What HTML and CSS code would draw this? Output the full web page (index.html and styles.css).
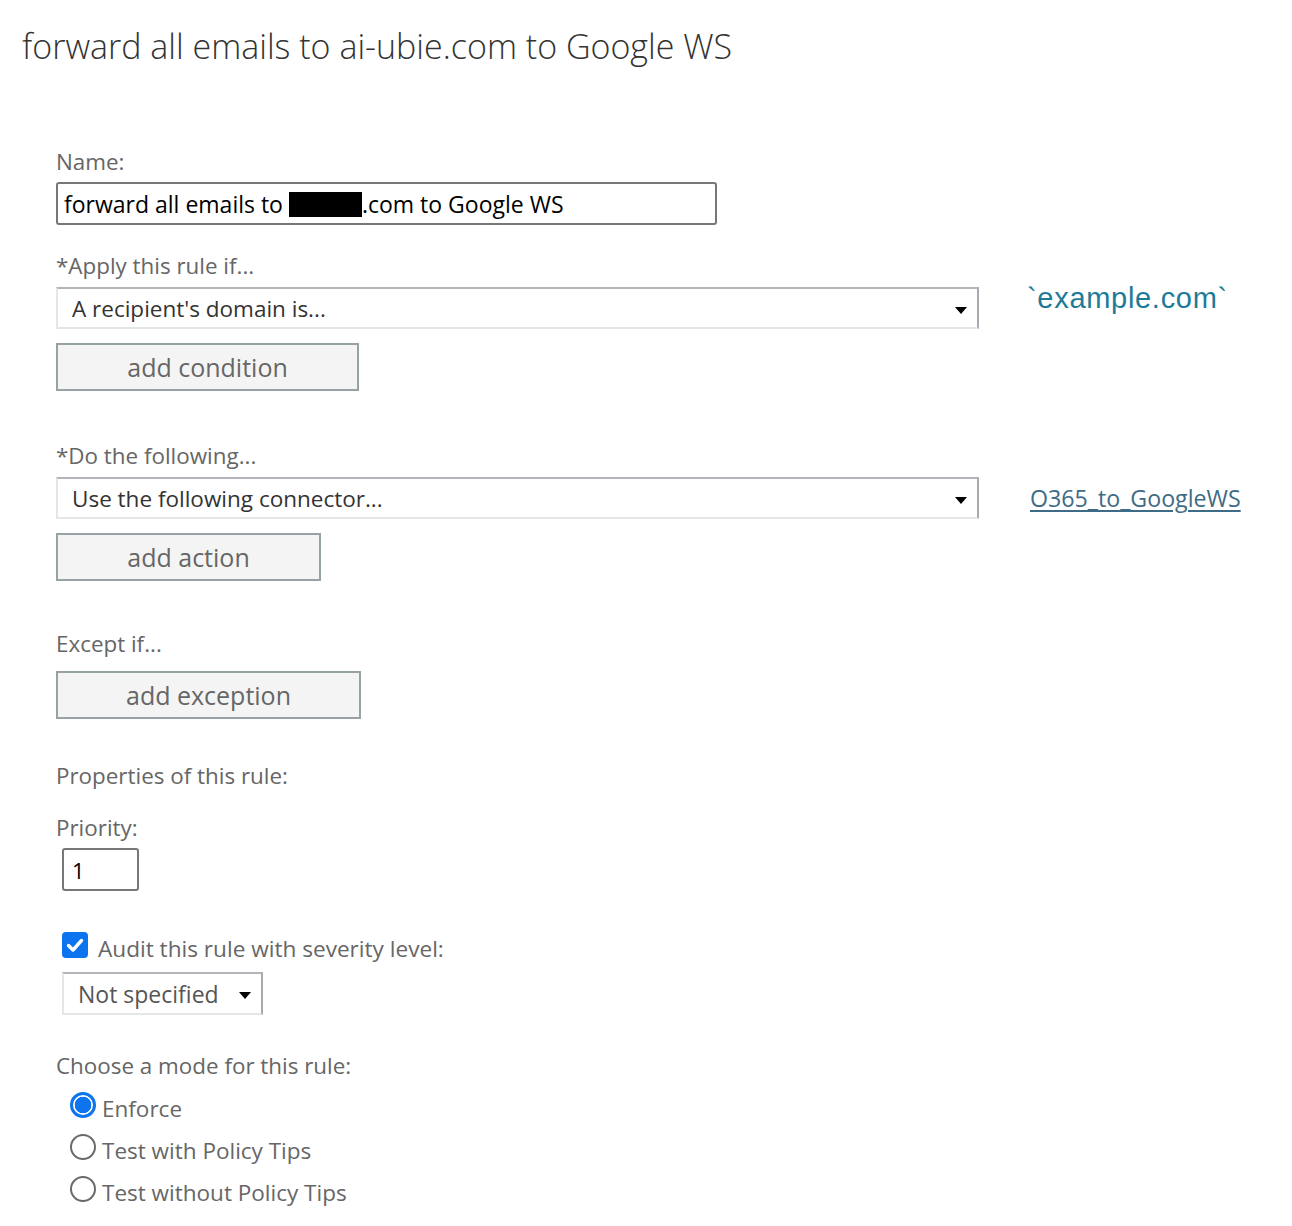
FILE: index.html
```html
<!DOCTYPE html>
<html lang="en">
<head>
<meta charset="utf-8">
<title>Rule</title>
<link rel="stylesheet" href="styles.css">
</head>
<body>
<h1 class="title">forward all emails to ai-ubie.com to Google WS</h1>
<div class="form">
  <div class="label">Name:</div>
  <div class="name-input"><span>forward all emails to </span><span class="redact"></span><span>.com to Google WS</span></div>

  <div class="label gap-l">*Apply this rule if...</div>
  <div class="row">
    <div class="select wide"><span>A recipient's domain is...</span><span class="arrow"></span></div>
    <div class="side-code">`example.com`</div>
  </div>
  <div class="btn btn-cond">add condition</div>

  <div class="label gap-xl">*Do the following...</div>
  <div class="row">
    <div class="select wide"><span>Use the following connector...</span><span class="arrow"></span></div>
    <a class="side-link" href="#">O365_to_GoogleWS</a>
  </div>
  <div class="btn btn-action">add action</div>

  <div class="label gap-xl2">Except if...</div>
  <div class="btn btn-exc">add exception</div>

  <div class="label gap-p">Properties of this rule:</div>
  <div class="label gap-pr">Priority:</div>
  <div class="priority">1</div>

  <div class="check-row">
    <span class="checkbox"><svg width="26" height="26" viewBox="0 0 26 26"><path d="M6.5 13.5l4.5 4.5 8.5-9.5" fill="none" stroke="#fff" stroke-width="3.4" stroke-linecap="round" stroke-linejoin="round"/></svg></span>
    <span class="check-label">Audit this rule with severity level:</span>
  </div>
  <div class="select small"><span>Not specified</span><span class="arrow"></span></div>

  <div class="label gap-mode">Choose a mode for this rule:</div>
  <div class="radios">
    <div class="radio-row"><span class="radio on"></span><span>Enforce</span></div>
    <div class="radio-row"><span class="radio"></span><span>Test with Policy Tips</span></div>
    <div class="radio-row"><span class="radio"></span><span>Test without Policy Tips</span></div>
  </div>
</div>
</body>
</html>
```
FILE: styles.css
```css
body {
  margin: 0;
  background: #fff;
  font-family: "Open Sans", "Noto Sans", sans-serif;
  color: #666;
}
.title {
  margin: 0;
  padding: 22px 0 0 22px;
  font-size: 34px;
  line-height: 48px;
  font-weight: 300;
  color: #333;
}
.form {
  padding-left: 56px;
  margin-top: 77px;
  display: flex;
  flex-direction: column;
  align-items: flex-start;
}
.label {
  font-size: 22.4px;
  line-height: 30px;
  color: #666;
}
.gap-l { margin-top: 26px; }
.gap-xl { margin-top: 50px; }
.gap-xl2 { margin-top: 48px; }
.gap-p { margin-top: 42px; }
.gap-pr { margin-top: 22px; }
.gap-mode { margin-top: 36px; }

.name-input {
  margin-top: 5px;
  box-sizing: border-box;
  width: 661px;
  height: 43px;
  border: 2px solid #777;
  border-radius: 3px;
  display: flex;
  align-items: center;
  padding-left: 6px;
  font-size: 23px;
  color: #000;
  white-space: pre;
}
.redact {
  display: inline-block;
  width: 73px;
  height: 25px;
  background: #000;
  margin-top: 2px;
}
.row {
  margin-top: 6px;
  display: flex;
  align-items: center;
}
.select {
  box-sizing: border-box;
  height: 42px;
  border-top: 2px solid #b4b4ba;
  border-right: 2px solid #a8a8b0;
  border-left: 2px solid #e3e7ea;
  border-bottom: 2px solid #e3e7ea;
  display: flex;
  align-items: center;
  justify-content: space-between;
  padding: 0 10px 0 14px;
  font-size: 22.5px;
  color: #333;
  background: #fff;
}
.select.wide { width: 923px; }
.select.small {
  width: 201px;
  height: 43px;
  margin-top: 9px;
  margin-left: 6px;
  padding-left: 14px;
  padding-right: 10px;
  font-size: 23px;
  color: #555;
}
.arrow {
  width: 0;
  height: 0;
  border-left: 6px solid transparent;
  border-right: 6px solid transparent;
  border-top: 7px solid #000;
  margin-top: 4px;
}
.side-code {
  margin-left: 48px;
  margin-top: -20px;
  font-family: "Liberation Sans", Arial, sans-serif;
  font-size: 29px;
  color: #1e7b98;
  letter-spacing: 0.7px;
}
.side-link {
  margin-left: 51px;
  font-size: 23.2px;
  color: #3e6b85;
  text-decoration: underline;
  text-underline-offset: 3px;
  text-decoration-thickness: 2px;
}
.btn {
  box-sizing: border-box;
  height: 48px;
  border: 2px solid #97a2a5;
  background: #f4f4f4;
  display: flex;
  align-items: center;
  justify-content: center;
  font-size: 25px;
  color: #666;
  margin-top: 14px;
}
.btn-cond { width: 303px; }
.btn-action { width: 265px; }
.btn-exc { width: 305px; margin-top: 12px; }

.priority {
  margin-top: 5px;
  margin-left: 6px;
  box-sizing: border-box;
  width: 77px;
  height: 43px;
  border: 2px solid #777;
  border-radius: 3px;
  display: flex;
  align-items: center;
  padding-left: 8px;
  font-size: 22px;
  color: #000;
}
.check-row {
  margin-top: 42px;
  height: 30px;
  display: flex;
  align-items: center;
  margin-left: 6px;
}
.checkbox {
  width: 26px;
  height: 26px;
  border-radius: 4px;
  background: #0b74ee;
  display: block;
  margin-top: -6px;
}
.checkbox svg { display: block; }
.check-label {
  margin-left: 10px;
  font-size: 22.6px;
  color: #666;
}
.radios {
  margin-top: 6px;
  display: flex;
  flex-direction: column;
}
.radio-row {
  height: 42px;
  display: flex;
  align-items: center;
  margin-left: 14px;
  font-size: 22.5px;
  color: #666;
}
.radio {
  box-sizing: border-box;
  width: 26px;
  height: 26px;
  border-radius: 50%;
  border: 2px solid #6a6a6a;
  margin-right: 6px;
  margin-top: -6px;
  background: #fff;
}
.radio.on {
  border: 3px solid #0b74ee;
  background: radial-gradient(circle, #0b74ee 0 8px, #fff 8.6px);
}
```
